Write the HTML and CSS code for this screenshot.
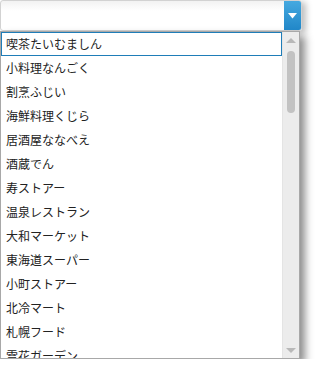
FILE: index.html
```html
<!doctype html>
<html lang="ja">
<head>
  <meta charset="UTF-8">
  <title>Combo</title>
  <link rel="stylesheet" href="styles.css">
</head>
<body>
<div class="combo">
  <div class="combo-input"></div>
  <div class="combo-btn">
    <svg width="9" height="6" viewBox="0 0 9 6"><path d="M0 0h9L4.5 5.5z" fill="#fff"/></svg>
  </div>
</div>
<div class="dropdown">
  <ul class="items">
    <li class="item selected">喫茶たいむましん</li>
    <li class="item">小料理なんごく</li>
    <li class="item">割烹ふじい</li>
    <li class="item">海鮮料理くじら</li>
    <li class="item">居酒屋ななべえ</li>
    <li class="item">酒蔵でん</li>
    <li class="item">寿ストアー</li>
    <li class="item">温泉レストラン</li>
    <li class="item">大和マーケット</li>
    <li class="item">東海道スーパー</li>
    <li class="item">小町ストアー</li>
    <li class="item">北冷マート</li>
    <li class="item">札幌フード</li>
    <li class="item">雪花ガーデン</li>
  </ul>
  <div class="scrollbar">
    <div class="arrow up"></div>
    <div class="track"><div class="thumb"></div></div>
    <div class="arrow down"></div>
  </div>
</div>
</body>
</html>
```
FILE: styles.css
```css
html, body { margin: 0; padding: 0; background: #fff; }
* { box-sizing: border-box; font-family: "Noto Sans CJK JP", "Noto Sans", sans-serif; }
.combo { display: flex; width: 302px; height: 31px; border: 1px solid #d2d2d2; border-radius: 3px; background: linear-gradient(#f2f2f2, #fff 10px); box-shadow: 4px 2px 6px rgba(0,0,0,0.25); overflow: hidden; }
.combo-input { flex: 1; }
.combo-btn { width: 17px; display: flex; align-items: center; justify-content: center; background: linear-gradient(#45a9e0, #2187c8); }
.dropdown { display: flex; width: 300px; height: 328px; border: 1px solid #a8a8a8; background: #fff; box-shadow: 5px 5px 8px rgba(0,0,0,0.45); overflow: hidden; }
.items { flex: 1; list-style: none; margin: 0; padding: 0; overflow: hidden; }
.item { height: 24px; line-height: 22px; padding: 0 4px; font-size: 12px; color: #222; border: 1px solid transparent; white-space: nowrap; }
.item.selected { border-color: #1f7db8; }
.scrollbar { width: 17px; display: flex; flex-direction: column; background: #ececec; border-left: 1px solid #e4e4e4; }
.arrow { height: 16px; display: flex; align-items: center; justify-content: center; }
.arrow::after { content: ""; border-left: 5px solid transparent; border-right: 5px solid transparent; }
.arrow.up::after { border-bottom: 5px solid #b8b8b8; }
.arrow.down::after { border-top: 5px solid #b8b8b8; }
.track { flex: 1; padding: 3px 4px 0; }
.thumb { width: 8px; height: 62px; border-radius: 4px; background: #c2c2c2; }
```
